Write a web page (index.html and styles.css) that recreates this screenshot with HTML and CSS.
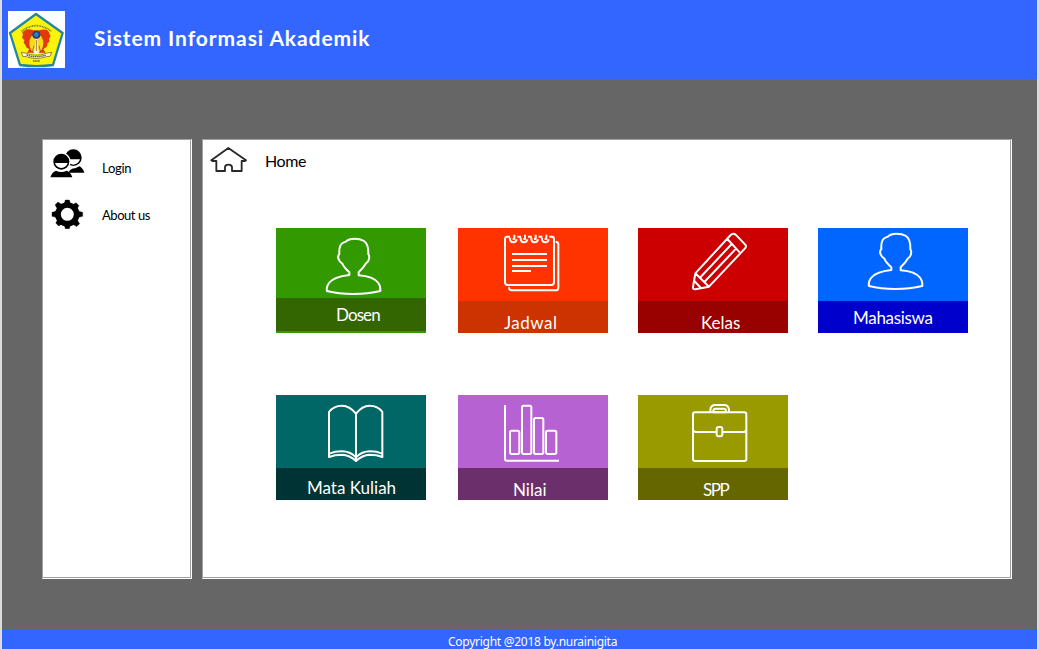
FILE: index.html
```html
<!DOCTYPE html>
<html lang="id">
<head>
<meta charset="utf-8">
<title>Sistem Informasi Akademik</title>
<link rel="stylesheet" href="styles.css">
</head>
<body>
<div class="app">
  <header class="header">
    <svg class="logo" viewBox="24 18 171 171">
      <path fill="#fff" d="M24 18h171v171H24z"/>
      <path d="M108 27L188 84L159 180Q109 187 60 180L30 84Z" fill="#faf40a" stroke="#2387a0" stroke-width="7" stroke-linejoin="round"/>
      <path d="M65 79Q108 45 154 79" fill="none" stroke="#77791a" stroke-width="5" stroke-dasharray="3 2"/>
      <path d="M100 76Q78 66 66 84Q72 88 66 95Q67 102 74 105Q67 113 76 119Q79 130 88 132L81 143H137L130 132Q145 126 142 115Q151 110 147 101Q155 93 148 86Q145 68 117 76Z" fill="#e13a0c"/>
      <ellipse cx="109" cy="115" rx="21" ry="29" fill="#f6dc18"/>
      <circle cx="109" cy="89" r="12" fill="#2b3a78"/><circle cx="109" cy="89" r="7" fill="#2f7fcf"/>
      <path d="M106 102L105 122L101 146H117L113 122L112 102Z" fill="#fff4dc"/>
      <path d="M109 104v34M102 122l-5 20M117 122l5 20" stroke="#7a3a20" stroke-width="2"/>
      <path d="M64 142L76 144Q109 158 141 144L155 142L150 154L139 155Q109 166 78 155L68 154Z" fill="#fff7dc" stroke="#594d28" stroke-width="2"/>
      <path d="M80 150Q109 160 138 150" fill="none" stroke="#544a3c" stroke-width="4" stroke-dasharray="4 2"/>
      <path d="M99 168h21" stroke="#73701c" stroke-width="4" stroke-dasharray="4 1"/>
      <path d="M54 187h108" stroke="#bbc5cf" stroke-width="2" stroke-dasharray="4 3"/>
    </svg>
    <h1 class="title">Sistem Informasi Akademik</h1>
  </header>
  <main class="main">
    <nav class="panel sidebar">
      <a class="link">
        <svg class="link-icon" viewBox="0 -2 108 99">
          <circle cx="70" cy="24" r="25" fill="#000"/>
          <path d="M50 29H90Q86 43 70 45Q54 43 50 29Z" fill="#fff"/>
          <path d="M54 69Q64 55 76 56L88 50Q99 55 103 69Z" fill="#000"/>
          <circle cx="34" cy="36" r="28" fill="#fff"/>
          <circle cx="34" cy="36" r="24" fill="#000"/>
          <path d="M15 40H53Q49 54 34 55Q19 54 15 40Z" fill="#fff"/>
          <path d="M1 83Q5 68 18 63Q34 71 50 63Q63 68 67 83Z" fill="#000"/>
        </svg>
        <span class="link-text link-text-login">Login</span>
      </a>
      <a class="link">
        <svg class="link-icon" viewBox="0 0 108 99">
          <g transform="translate(52 55)">
            <circle r="28" fill="none" stroke="#000" stroke-width="17"/>
            <path id="teeth" d="M-6 -43H6L9 -33H-9ZM-6 43H6L9 33H-9ZM-46 -6V6L-34 9V-9ZM46 -6V6L34 9V-9Z" fill="#000" stroke="#000" stroke-width="1"/>
            <use href="#teeth" transform="rotate(45)"/>
          </g>
        </svg>
        <span class="link-text link-text-about">About us</span>
      </a>
    </nav>
    <section class="panel content">
      <div class="heading">
        <svg class="home-icon" viewBox="519 36 114 84">
          <path d="M526 79L577 42L630 79L627 81H617V111H588V99Q587 92 577 92Q568 92 567 99V111H541V81H529Z" fill="none" stroke="#292929" stroke-width="5.5" stroke-linejoin="round"/>
        </svg>
        <h2 class="heading-text">Home</h2>
      </div>
      <div class="tiles">
        <a class="tile dosen">
          <svg class="tile-icon" viewBox="18 18 450 210">
            <path id="person" d="M252 50Q271 50 282 57Q296 66 295 97Q299 101 297 111Q295 121 288 124Q281 137 266 151V160Q310 163 325 183Q332 192 331 207Q294 216 250 216Q205 216 171 207Q168 195 177 183Q191 164 238 159V151Q222 137 217 125Q209 121 205 110Q203 101 208 96Q206 66 222 61Q227 61 231 56Q239 50 252 50Z"/>
          </svg>
          <span class="label"><span class="label-text">Dosen</span></span>
        </a>
        <a class="tile jadwal">
          <svg class="tile-icon" viewBox="18 18 450 219">
            <path d="M174 44H166Q159 44 159 51V181Q159 189 167 189H298Q306 189 306 181V51Q306 44 299 44H292M196 44H207M228 44H239M260 44H271M311 59Q319 60 319 66V197Q319 205 311 205H178Q171 205 171 196M180 96H285M180 114H285M180 132H285M180 147H237"/>
            <path d="M187 38V51H182M174 47Q173 61 184 61Q193 60 194 52M219 38V51H214M206 47Q205 61 216 61Q225 60 226 52M251 38V51H246M238 47Q237 61 248 61Q257 60 258 52M283 38V51H278M270 47Q269 61 280 61Q289 60 290 52"/>
          </svg>
          <span class="label"><span class="label-text">Jadwal</span></span>
        </a>
        <a class="tile kelas">
          <svg class="tile-icon" viewBox="18 18 450 219">
            <path d="M190 154L296 39Q304 32 311 38L339 67Q345 73 339 79L231 194L190 202Q182 203 183 195ZM190 154L231 194M286 51L323 91M206 165L299 66M217 180L312 80M187 177L207 198"/>
          </svg>
          <span class="label"><span class="label-text">Kelas</span></span>
        </a>
        <a class="tile mahasiswa">
          <svg class="tile-icon" viewBox="18 18 450 219"><use href="#person" transform="translate(0 -15)"/></svg>
          <span class="label"><span class="label-text">Mahasiswa</span></span>
        </a>
        <a class="tile matkul">
          <svg class="tile-icon" viewBox="18 15 450 219">
            <path d="M258 71Q239 47 216 47Q191 47 177 66V201Q194 194 216 194Q239 195 258 213Q277 195 299 194Q321 194 337 201V66Q324 47 299 47Q276 47 258 71V208M178 191Q194 184 216 184Q240 184 258 202Q276 184 300 184Q321 184 336 191"/>
          </svg>
          <span class="label"><span class="label-text">Mata Kuliah</span></span>
        </a>
        <a class="tile nilai">
          <svg class="tile-icon" viewBox="18 15 450 219">
            <path d="M159 45V207Q159 212 165 212H321"/>
            <rect x="174" y="122" width="28" height="70" rx="5"/><rect x="210" y="47" width="28" height="145" rx="5"/><rect x="246" y="84" width="28" height="108" rx="5"/><rect x="282" y="122" width="31" height="70" rx="5"/>
          </svg>
          <span class="label"><span class="label-text">Nilai</span></span>
        </a>
        <a class="tile spp">
          <svg class="tile-icon" viewBox="18 15 450 219">
            <rect x="183" y="67" width="160" height="146" rx="6"/>
            <path d="M183 119Q184 126 191 126H253M271 126H335Q342 126 343 119M235 67V60Q236 45 250 45H276Q290 45 291 60V67M244 67Q243 56 251 56H275Q283 56 282 67Z"/>
            <rect x="254" y="111" width="17" height="28" rx="6"/>
          </svg>
          <span class="label"><span class="label-text">SPP</span></span>
        </a>
      </div>
    </section>
  </main>
  <footer class="footer"><span class="copyright">Copyright @2018 by.nurainigita</span></footer>
</div>
</body>
</html>
```
FILE: styles.css
```css
* { box-sizing: border-box; }
body { margin: 0; height: 649px; overflow: hidden; font-family: Lato, sans-serif; color: #000; background: #dcdcdc; }
.app { height: 649px; margin: 0 2px; display: flex; flex-direction: column; background: #666; }
.header { height: 79px; flex: none; display: flex; align-items: flex-start; background: #36f; padding: 11px 0 0 6px; }
.logo { width: 57px; height: 57px; flex: none; }
.title { margin: 14px 0 0 29px; font-size: 21px; line-height: 25px; font-weight: 700; color: #fff; letter-spacing: 0.92px; white-space: nowrap; }
.main { flex: 1; display: flex; gap: 10px; padding: 60px 25px 50px 40px; }
.panel { background: #fff; border: 1px solid #a0a0a0; border-right-color: #fff; border-bottom-color: #fff; box-shadow: inset -1px -1px #a0a0a0; }
.sidebar { width: 150px; padding: 9px 7px; display: flex; flex-direction: column; gap: 14px; }
.link { display: flex; height: 33px; }
.link-icon { width: 36px; height: 33px; flex: none; }
.link-text { margin: 11px 0 0 16px; font-size: 13px; line-height: 16px; white-space: nowrap; }
.link-text-login { letter-spacing: -0.3px; }
.link-text-about { letter-spacing: -0.45px; }
.content { width: 810px; padding: 6px 0 0 6px; }
.heading { display: flex; height: 30px; }
.home-icon { width: 38px; height: 28px; }
.heading-text { margin: 5px 0 0 18px; font-size: 16px; line-height: 20px; font-weight: 400; letter-spacing: -0.4px; }
.tiles { display: grid; grid-template-columns: 152px 150px 150px 150px; column-gap: 30px; row-gap: 62px; margin: 52px 0 0 67px; }
.tile { width: 150px; height: 105px; display: flex; flex-direction: column; }
.tile-icon { width: 150px; height: 73px; flex: none; fill: none; stroke: #fff; stroke-width: 6; stroke-linejoin: round; }
.label { height: 32px; padding-top: 12px; color: #fff; font-size: 17px; line-height: 20px; white-space: nowrap; }
.dosen { background: #390; }
.dosen .tile-icon { height: 70px; }
.dosen .label { height: 33px; background: #360; padding: 7px 0 0 60px; letter-spacing: -0.9px; }
.jadwal { background: #f30; }
.jadwal .label { background: #c30; padding-left: 46px; letter-spacing: 0.5px; }
.kelas { background: #c00; }
.kelas .label { background: #900; padding-left: 63px; }
.mahasiswa { background: #06f; }
.mahasiswa .label { background: #00c; padding: 7px 0 0 35px; letter-spacing: -0.3px; }
.matkul { background: #066; }
.matkul .label { background: #033; padding: 10px 0 0 31px; }
.nilai { background: #b662d3; }
.nilai .label { background: #6b2f6b; padding-left: 55px; }
.spp { background: #990; }
.spp .label { background: #660; padding-left: 65px; letter-spacing: -1.5px; }
.footer { height: 20px; flex: none; background: #36f; padding: 5px 0 0 446px; color: #fff; font: 12px/16px "Noto Sans", sans-serif; letter-spacing: -0.27px; white-space: nowrap; }
```
